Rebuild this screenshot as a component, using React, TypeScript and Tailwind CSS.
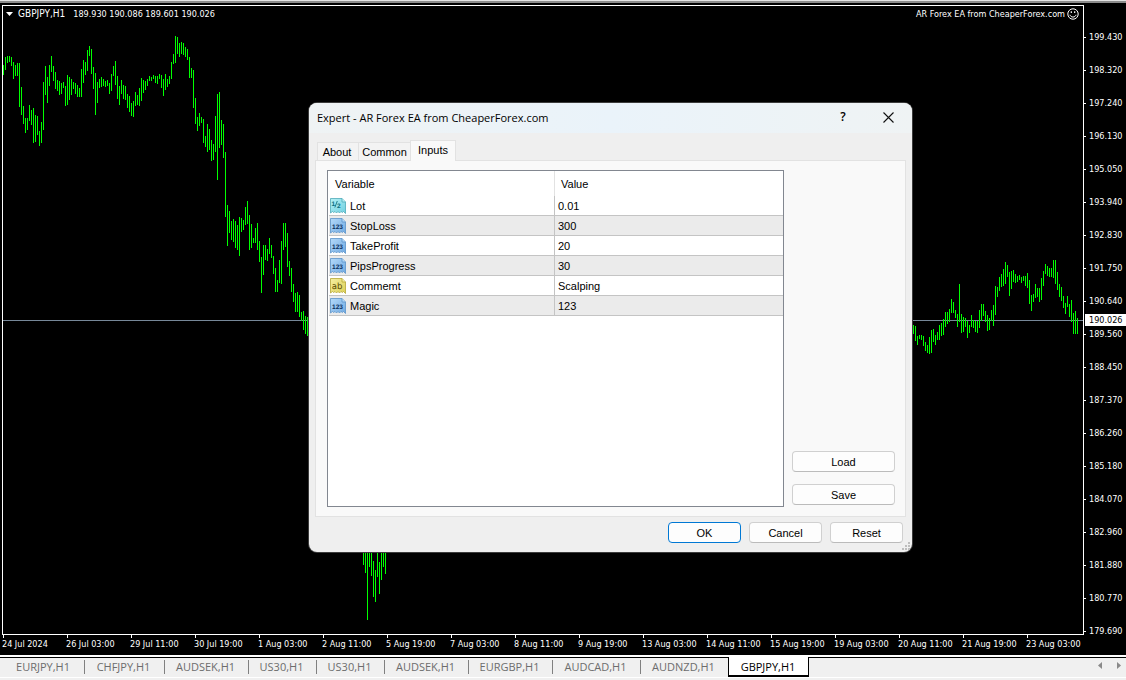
import React from "react";

type Run = { x: number; bars: number[][] };

// High/low extents of each hourly bar; consecutive bars are two units apart.
const runs: Run[] = [
  {
    x: 3,
    bars: [
      [65, 75], [57, 70], [56, 63], [56, 62], [57, 66], [62, 79], [65, 76], [63, 76], [63, 107], [87, 115],
      [106, 124], [118, 133], [118, 130], [105, 121], [110, 125], [108, 143], [115, 142], [116, 135], [131, 146], [122, 143],
      [82, 130], [66, 95], [77, 103], [65, 86], [56, 72], [66, 81], [72, 89], [80, 91], [81, 95], [83, 94],
      [82, 88], [86, 106], [75, 105], [77, 100], [79, 95], [82, 89], [83, 94], [85, 97], [88, 97], [69, 97],
      [60, 83], [62, 75], [50, 71], [46, 56], [49, 74], [67, 89], [73, 115], [82, 103], [79, 88], [77, 87],
      [79, 86], [81, 87], [80, 86], [83, 94], [74, 91], [66, 76], [61, 85], [76, 99], [86, 105], [80, 94],
      [85, 99], [86, 100], [94, 108], [96, 112], [103, 116], [101, 117], [92, 106], [95, 105], [88, 106], [78, 101],
      [80, 93], [81, 90], [79, 86], [76, 81], [77, 81], [75, 79], [76, 83], [76, 84], [74, 79], [75, 88],
      [79, 96], [74, 90], [79, 87], [76, 84], [62, 79], [54, 64], [36, 63], [37, 54], [43, 57], [42, 54],
      [43, 55], [47, 57], [49, 60], [57, 78], [68, 78], [70, 108], [98, 124], [117, 131], [113, 126], [117, 123],
      [119, 143], [136, 147], [124, 152], [129, 150], [140, 161], [144, 160], [116, 152], [94, 180], [92, 148], [120, 145],
      [124, 158], [152, 217], [205, 246], [211, 233], [221, 240], [219, 242], [221, 248], [225, 250], [217, 256], [218, 232],
      [220, 230], [207, 225], [201, 224], [215, 250], [224, 248], [238, 243], [228, 243], [223, 250], [241, 262], [257, 293],
      [245, 275], [245, 260], [249, 261], [238, 254], [245, 258], [256, 274], [268, 292], [280, 292], [260, 283], [241, 284],
      [223, 250], [223, 247], [233, 267], [261, 276], [268, 292], [284, 302], [293, 312], [292, 312], [295, 317], [312, 321],
      [311, 330], [316, 334], [317, 336],
    ],
  },
  {
    x: 363,
    bars: [
      [530, 565], [530, 573], [530, 620], [530, 567], [530, 576], [561, 597], [570, 602], [530, 577], [562, 594], [530, 580],
      [530, 567], [530, 574],
    ],
  },
  {
    x: 913,
    bars: [
      [325, 334], [326, 341], [336, 345], [335, 339], [335, 340], [336, 346], [342, 351], [345, 353], [337, 354], [330, 353],
      [329, 342], [335, 345], [332, 340], [325, 340], [323, 336], [319, 335], [312, 327], [312, 324], [309, 322], [299, 313],
      [302, 313], [310, 318], [314, 327], [284, 322], [314, 333], [317, 332], [318, 327], [321, 338], [325, 333], [315, 327],
      [320, 328], [321, 332], [321, 333], [310, 328], [304, 321], [304, 316], [311, 322], [315, 331], [318, 330], [310, 321],
      [305, 326], [286, 315], [287, 297], [277, 291], [274, 287], [269, 286], [262, 284], [265, 277], [272, 296], [271, 289],
      [270, 282], [274, 283], [276, 282], [275, 280], [277, 283], [276, 281], [276, 286], [273, 288], [280, 304], [295, 311],
      [294, 302], [284, 298], [288, 297], [288, 302], [278, 300], [271, 286], [264, 274], [266, 276], [268, 277], [268, 277],
      [260, 278], [260, 284], [272, 290], [284, 297], [287, 301], [296, 308], [303, 314], [296, 307], [304, 317], [300, 322],
      [313, 334], [311, 334], [318, 334],
    ],
  },
];

const barPath = runs
  .map((r) => r.bars.map(([hi, lo], i) => `M${r.x + i * 2} ${hi}h1V${lo}h-1z`).join(""))
  .join("");

const prices = [
  "199.430", "198.320", "197.240", "196.130", "195.050", "193.940", "192.830", "191.750", "190.640", "189.560",
  "188.450", "187.370", "186.260", "185.180", "184.070", "182.960", "181.880", "180.770", "179.690",
];

const times = [
  "24 Jul 2024", "26 Jul 03:00", "29 Jul 11:00", "30 Jul 19:00", "1 Aug 03:00", "2 Aug 11:00", "5 Aug 19:00",
  "7 Aug 03:00", "8 Aug 11:00", "9 Aug 19:00", "13 Aug 03:00", "14 Aug 11:00", "15 Aug 19:00", "19 Aug 03:00",
  "20 Aug 11:00", "21 Aug 19:00", "23 Aug 03:00",
];

const symbols = [
  { name: "EURJPY,H1", width: "w-20" },
  { name: "CHFJPY,H1", width: "w-20" },
  { name: "AUDSEK,H1", width: "w-21" },
  { name: "US30,H1", width: "w-17" },
  { name: "US30,H1", width: "w-17" },
  { name: "AUDSEK,H1", width: "w-21" },
  { name: "EURGBP,H1", width: "w-21" },
  { name: "AUDCAD,H1", width: "w-22" },
  { name: "AUDNZD,H1", width: "w-22" },
];

type Kind = "real" | "int" | "text";

const inputs: { name: string; value: string; kind: Kind }[] = [
  { name: "Lot", value: "0.01", kind: "real" },
  { name: "StopLoss", value: "300", kind: "int" },
  { name: "TakeProfit", value: "20", kind: "int" },
  { name: "PipsProgress", value: "30", kind: "int" },
  { name: "Commemt", value: "Scalping", kind: "text" },
  { name: "Magic", value: "123", kind: "int" },
];

const palette = {
  real: { light: "#b5f1f5", dark: "#6fcfe0", edge: "#4fa9b8", ink: "#0d6f80" },
  int: { light: "#b4dafa", dark: "#6fa8e0", edge: "#5b93c9", ink: "#0b2f5e" },
  text: { light: "#f6f0a0", dark: "#dccf55", edge: "#b5a636", ink: "#5a4d00" },
};

function TypeIcon({ kind }: { kind: Kind }) {
  const c = palette[kind];
  const id = `fill-${kind}`;
  return (
    <svg className="block size-4 shrink-0" viewBox="0 0 16 16" aria-hidden="true">
      <defs>
        <linearGradient id={id} x1="0" y1="0" x2="1" y2="1">
          <stop offset="0" stopColor={c.light} />
          <stop offset="1" stopColor={c.dark} />
        </linearGradient>
      </defs>
      <path
        d="M.5.5h11.5l3.5 3.5v11.5l-2-2-1 1-1.5-1-1.5 1.5-1.5-1.5-1.5 1.5-1.5-1.5-1.5 1-1-1-2 1.5z"
        fill={`url(#${id})`}
        stroke={c.edge}
        strokeWidth=".8"
      />
      <path d="M12 .5v3.500h3.500" fill={c.light} stroke={c.edge} strokeWidth=".8" />
      {kind === "real" && (
        <g fill={c.ink} fontFamily="Liberation Sans, sans-serif" fontWeight="700" textRendering="geometricPrecision">
          <text x="1.500" y="7.500" fontSize="6.500">1</text>
          <path d="M7.300 3 4.800 9.500" stroke={c.ink} strokeWidth=".9" />
          <text x="7" y="10" fontSize="6.500">2</text>
        </g>
      )}
      {kind === "int" && (
        <text x="7.500" y="11" textAnchor="middle" fontSize="6.500" fontWeight="700" fontFamily="Liberation Sans, sans-serif" textRendering="geometricPrecision" fill={c.ink}>
          123
        </text>
      )}
      {kind === "text" && (
        <text x="7" y="11" textAnchor="middle" fontSize="8.500" fontFamily="DejaVu Sans, sans-serif" textRendering="geometricPrecision" fill={c.ink}>
          ab
        </text>
      )}
    </svg>
  );
}

function PushButton({ label, className, primary }: { label: string; className?: string; primary?: boolean }) {
  const edge = primary ? "border-[#0078d4]" : "border-[#d0d0d0] border-b-[#bbbbbb]";
  return (
    <button type="button" className={`h-[21px] rounded border bg-[#fdfdfd] pt-0.5 text-center leading-[17px] ${edge} ${className ?? ""}`}>
      {label}
    </button>
  );
}

function ExpertDialog() {
  return (
    <div
      role="dialog"
      aria-labelledby="expert-title"
      className="absolute left-[309px] top-[103px] flex w-[603px] flex-col overflow-hidden rounded-lg bg-[#efefef] font-['Liberation_Sans',Arial,sans-serif] text-[11px] text-black shadow-[0_0_0_1px_#3c3c3c]"
    >
      <header className="flex h-[30px] items-center justify-between bg-linear-to-r from-[#eff3f4] via-[#eaf3fa] to-[#eff3f4] pl-2 pr-[18px]">
        <h1 id="expert-title" className="font-['Open_Sans','Noto_Sans',sans-serif] text-[11px]">
          Expert - AR Forex EA from CheaperForex.com
        </h1>
        <div className="flex items-center gap-9 pb-0.5">
          <button type="button" aria-label="Help" className="w-2 font-['Open_Sans','Noto_Sans',sans-serif] text-xs font-semibold">
            ?
          </button>
          <button type="button" aria-label="Close">
            <svg className="block size-[11px]" viewBox="0 0 11 11" stroke="#111" strokeWidth="1.1" aria-hidden="true">
              <path d="M.5.5l10 10M10.5.5l-10 10" />
            </svg>
          </button>
        </div>
      </header>

      <div className="px-1.5 pt-[7px]">
        <div role="tablist" className="flex items-end pl-0.5">
          <button type="button" role="tab" aria-selected="false" className="h-[18px] w-[42px] border border-b-0 border-[#e2e2e2] bg-[#f3f3f3] pr-0.5 text-center leading-[19px]">
            About
          </button>
          <button type="button" role="tab" aria-selected="false" className="h-[18px] w-[51px] border-t border-[#e2e2e2] bg-[#f3f3f3] text-center leading-[19px]">
            Common
          </button>
          <button type="button" role="tab" aria-selected="true" className="relative -mb-px h-[21px] w-[46px] border border-b-0 border-[#e2e2e2] bg-[#f9f9f9] pb-0.5 text-center leading-[18px]">
            Inputs
          </button>
        </div>

        <div role="tabpanel" className="flex gap-2 border border-[#e2e2e2] bg-[#f9f9f9] py-[9px] pl-[11px] pr-2.5">
          <div className="h-[337px] flex-1 border border-[#828790] bg-white pl-px">
            <table className="w-full table-fixed border-separate border-spacing-0">
              <thead>
                <tr className="h-[25px]">
                  <th scope="col" className="w-[226px] border-r border-[#e2e2e2] p-0 pl-1.5 pt-0.5 text-left font-normal">Variable</th>
                  <th scope="col" className="p-0 pl-1.5 pt-0.5 text-left font-normal">Value</th>
                </tr>
              </thead>
              <tbody>
                {inputs.map((row) => (
                  <tr key={row.name} className="h-5 even:bg-[#ebebeb]">
                    <td className="border-b border-r border-[#c4c4c4] p-0 pl-px">
                      <div className="flex h-[19px] items-center gap-1">
                        <TypeIcon kind={row.kind} />
                        <span className="pt-0.5">{row.name}</span>
                      </div>
                    </td>
                    <td className="border-b border-[#c4c4c4] p-0 pl-[3px]">
                      <div className="flex h-[19px] items-center pt-0.5">{row.value}</div>
                    </td>
                  </tr>
                ))}
              </tbody>
            </table>
          </div>
          <div className="flex w-[103px] flex-col justify-end gap-3 pb-0.5">
            <PushButton label="Load" />
            <PushButton label="Save" />
          </div>
        </div>
      </div>

      <footer className="flex h-[35px] justify-end gap-2 pr-[9px] pt-[5px]">
        <PushButton label="OK" primary className="w-[73px]" />
        <PushButton label="Cancel" className="w-[73px]" />
        <PushButton label="Reset" className="w-[73px]" />
      </footer>
      <svg className="absolute bottom-0.5 right-0.5 size-2" viewBox="0 0 8 8" fill="#bdbdbd" aria-hidden="true">
        <path d="M6 0h2v2H6zM3 3h2v2H3zM6 3h2v2H6zM0 6h2v2H0zM3 6h2v2H3zM6 6h2v2H6z" />
      </svg>
    </div>
  );
}

function Chart() {
  return (
    <main className="flex flex-1 bg-black pl-0.5 font-['DejaVu_Sans_Condensed','Noto_Sans',sans-serif] text-[9px] text-white">
      <div className="flex min-w-0 flex-1 flex-col pt-0.5">
        <div className="relative flex-1 border border-white">
          <svg className="absolute inset-0 size-full" viewBox="3 6 1080 628" preserveAspectRatio="none" shapeRendering="crispEdges" aria-hidden="true">
            <path d="M3 320h1080v1H3z" fill="#778899" />
            <path d={barPath} fill="#00ff00" />
          </svg>
          <div className="relative flex items-center justify-between pl-[3px] pr-1 pt-0.5 leading-3">
            <p className="flex items-center">
              <svg className="mr-[5px] block h-1 w-[7px]" viewBox="0 0 7 4" fill="#fff" aria-hidden="true">
                <path d="M0 0h7L3.5 4z" />
              </svg>
              <span className="mr-2 text-[10px]">GBPJPY,H1</span>
              <span>189.930 190.086 189.601 190.026</span>
            </p>
            <p className="flex items-center gap-0.5">
              AR Forex EA from CheaperForex.com
              <svg className="block size-3" viewBox="0 0 12 12" fill="none" stroke="#fff" aria-hidden="true">
                <circle cx="6" cy="6" r="5.2" />
                <path d="M3 6.8c.6 3 5.4 3 6 0" />
                <path d="M4.3 3.3v1.8M7.7 3.3v1.8" strokeWidth="1.2" />
              </svg>
            </p>
          </div>
        </div>
        <ol className="flex h-5">
          {times.map((t) => (
            <li key={t} className="w-16 shrink-0 whitespace-nowrap leading-3">
              <span className="ml-px block h-[3px] w-px bg-white" />
              {t}
            </li>
          ))}
        </ol>
      </div>

      <aside className="relative w-[42px] shrink-0 pb-[7px] pt-[18px]">
        <ol className="flex h-full flex-col">
          {prices.map((p) => (
            <li key={p} className="flex flex-1 items-center gap-[3px]">
              <span className="h-px w-0.5 bg-white" />
              {p}
            </li>
          ))}
        </ol>
        <div className="absolute bottom-[21px] left-px right-0 top-[3px] flex items-center">
          <span className="h-3 flex-1 bg-white pl-1 leading-3 text-black">190.026</span>
        </div>
      </aside>
    </main>
  );
}

export default function App() {
  return (
    <div className="relative flex min-h-screen flex-col bg-[#f0f0f0]">
      <div className="h-[3px] border-b-2 border-[#8c8c8c] bg-[#e3e3e3]" />
      <Chart />
      <nav className="flex h-[25px] items-start border-t-2 border-white font-['Open_Sans','Noto_Sans',sans-serif] text-[11px] text-[#6d6d6d]">
        <div className="flex h-[21px] flex-1 items-start border-b border-white">
          <div className="flex h-[21px] flex-1 items-start border-t border-black pl-1">
            {symbols.map((s, i) => (
              <button
                key={i}
                type="button"
                className={`${s.width} mt-0.5 h-3.5 pr-0.5 text-center leading-[14px] ${i > 0 ? "border-l border-[#808080]" : ""}`}
              >
                {s.name}
              </button>
            ))}
            <button type="button" aria-current="page" className="-mt-px h-5 w-[81px] border border-b-2 border-t-0 border-black bg-white pr-px pt-0.5 text-center leading-4 text-black">
              GBPJPY,H1
            </button>
            <div className="ml-auto flex items-center gap-[15px] pr-[5px] pt-1">
              <button type="button" aria-label="Scroll tabs left">
                <svg className="block h-[7px] w-1" viewBox="0 0 4 7" fill="#8a8a8a" aria-hidden="true"><path d="M4 0v7L0 3.5z" /></svg>
              </button>
              <button type="button" aria-label="Scroll tabs right">
                <svg className="block h-[7px] w-1" viewBox="0 0 4 7" fill="#8a8a8a" aria-hidden="true"><path d="M0 0v7l4-3.5z" /></svg>
              </button>
            </div>
          </div>
        </div>
      </nav>
      <ExpertDialog />
    </div>
  );
}
